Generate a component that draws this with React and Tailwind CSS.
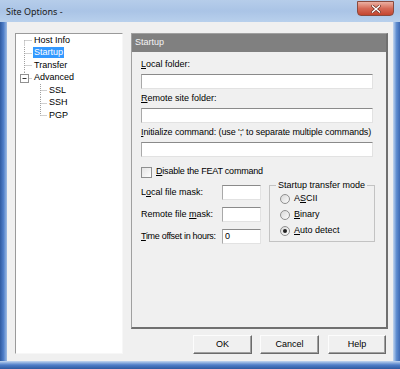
import React from 'react';

const Edit = ({ className = '', value = '' }) => (
  <div
    className={`h-[15px] bg-white border border-t-[#8a8a8a] border-l-[#a9a9a9] border-r-[#e2e2e2] border-b-[#e2e2e2] pl-[2px] leading-[13px] ${className}`}
  >
    {value}
  </div>
);

const Radio = ({ checked, children }) => (
  <div className="flex items-center h-[16px]">
    <span className="ml-[10px] w-[10px] h-[10px] rounded-full border border-[#8f8f8f] bg-gradient-to-br from-[#d8d8d8] to-[#fbfbfb] flex items-center justify-center">
      {checked && <span className="w-[4px] h-[4px] rounded-full bg-[#1f1f1f]" />}
    </span>
    <span className="ml-[4px]">{children}</span>
  </div>
);

const Line = ({ x1, y1, x2, y2 }) => (
  <line x1={x1} y1={y1} x2={x2} y2={y2} stroke="#a0a0a0" strokeWidth="1" strokeDasharray="1 1" />
);

const TreeRow = ({ level = 1, first, last, expander, selected, children }) => {
  const w = level === 1 ? 17 : 32;
  const vx = level === 1 ? 8.5 : 24.5;
  return (
    <div className="flex items-center h-[12.5px]">
      <svg width={w} height="12.5" className="shrink-0">
        <Line x1={vx} y1={first ? 6.5 : 0} x2={vx} y2={last ? 6.5 : 12.5} />
        <Line x1={vx} y1={6.5} x2={w - 1} y2={6.5} />
        {expander && (
          <g>
            <rect x="4.5" y="2.5" width="8" height="8" fill="#fff" stroke="#919191" />
            <line x1="6.5" y1="6.5" x2="10.5" y2="6.5" stroke="#333" />
          </g>
        )}
      </svg>
      <span
        className={`px-[1px] leading-[11px] ${selected ? 'bg-[#3399ff] text-white' : ''}`}
      >
        {children}
      </span>
    </div>
  );
};

const Button = ({ className = '', children }) => (
  <div
    className={`h-[19px] flex items-center justify-center bg-[#f0f0f0] border border-t-[#fcfcfc] border-l-[#fcfcfc] border-r-[#6b6b6b] border-b-[#6b6b6b] shadow-[inset_-1px_-1px_0_#a0a0a0] ${className}`}
  >
    {children}
  </div>
);

export default function App() {
  return (
    <div className="w-[400px] h-[369px] flex flex-col bg-[#5b88cc] font-['Liberation_Sans',Arial,sans-serif] text-[9px] text-black overflow-hidden">
      {/* title bar */}
      <div className="h-[22px] shrink-0 flex items-start bg-gradient-to-b from-[#b6cdea] via-[#aac4e6] to-[#b8d0ec]">
        <span className="ml-[6px] mt-[5px] font-['Noto_Sans',sans-serif] text-[9px] leading-[13px] text-[#1a1a1a]">
          Site Options -
        </span>
        <div className="ml-auto mr-[6px] mt-[1px] w-[37px] h-[15px] rounded-b-[4px] border border-[#8a4a3e] bg-gradient-to-b from-[#eab0a3] via-[#d56a57] to-[#c4442e] flex items-center justify-center">
          <svg width="10" height="8" viewBox="0 0 10 8">
            <path d="M1.5 1 L8.5 7 M8.5 1 L1.5 7" stroke="#6a2a1f" strokeWidth="2.8" strokeLinecap="square" />
            <path d="M1.5 1 L8.5 7 M8.5 1 L1.5 7" stroke="#ffffff" strokeWidth="1.5" strokeLinecap="square" />
          </svg>
        </div>
      </div>

      {/* body */}
      <div className="flex h-[339px] shrink-0">
        <div className="w-[7px] bg-gradient-to-r from-[#2f5aa0] via-[#4f7ec8] to-[#9fbce3]" />
        <div className="w-[386px] bg-[#f0f0f0] flex pt-[11px] pl-[8px] gap-[8px]">
          {/* tree */}
          <div className="w-[108px] h-[321px] bg-white border border-t-[#9a9a9a] border-l-[#9a9a9a] border-r-[#f7f7f7] border-b-[#f7f7f7]">
            <TreeRow first>Host Info</TreeRow>
            <TreeRow selected>Startup</TreeRow>
            <TreeRow>Transfer</TreeRow>
            <TreeRow last expander>Advanced</TreeRow>
            <TreeRow level={2}>SSL</TreeRow>
            <TreeRow level={2}>SSH</TreeRow>
            <TreeRow level={2} last>PGP</TreeRow>
          </div>

          {/* right side */}
          <div className="w-[257px] flex flex-col">
            <div className="h-[296px] border-l border-t border-l-[#a0a0a0] border-t-[#a0a0a0] border-r-2 border-b-2 border-r-[#707070] border-b-[#707070] flex flex-col">
              <div className="h-[18px] bg-[#808080] text-[#f4f4f4] pl-[3px] flex items-center">Startup</div>
              <div className="pl-[9px] flex flex-col">
                <div className="mt-[7px] h-[11px] leading-[11px]"><u>L</u>ocal folder:</div>
                <Edit className="mt-[4px] w-[232px]" />
                <div className="mt-[4px] h-[11px] leading-[11px]"><u>R</u>emote site folder:</div>
                <Edit className="mt-[4px] w-[232px]" />
                <div className="mt-[4px] h-[11px] leading-[11px] tracking-[-0.1px]">
                  <u>I</u>nitialize command: (use ';' to separate multiple commands)
                </div>
                <Edit className="mt-[4px] w-[232px]" />

                <div className="mt-[9px] h-[12px] flex items-center">
                  <span className="w-[11px] h-[11px] border border-[#8e8f8f] bg-gradient-to-br from-[#e4e4e4] to-[#fdfdfd]" />
                  <span className="ml-[4px] tracking-[-0.2px]"><u>D</u>isable the FEAT command</span>
                </div>

                <div className="mt-[7px] flex items-start">
                  <div className="flex flex-col gap-[7px]">
                    <div className="flex items-center h-[15px]">
                      <span className="w-[81px]">L<u>o</u>cal file mask:</span>
                      <Edit className="w-[39px]" />
                    </div>
                    <div className="flex items-center h-[15px]">
                      <span className="w-[81px]">Remote file <u>m</u>ask:</span>
                      <Edit className="w-[39px]" />
                    </div>
                    <div className="flex items-center h-[15px]">
                      <span className="w-[81px] whitespace-nowrap tracking-[-0.3px]"><u>T</u>ime offset in hours:</span>
                      <Edit className="w-[39px]" value="0" />
                    </div>
                  </div>
                  <fieldset className="ml-[8px] mt-[-5px] w-[106px] border border-[#c3c3c3] pb-[2px]">
                    <legend className="ml-[6px] px-[2px] leading-[11px]">Startup transfer mode</legend>
                    <Radio>A<u>S</u>CII</Radio>
                    <Radio><u>B</u>inary</Radio>
                    <Radio checked><u>A</u>uto detect</Radio>
                  </fieldset>
                </div>
              </div>
            </div>

            <div className="mt-[6px] flex pl-[62px]">
              <Button className="w-[59px]">OK</Button>
              <Button className="w-[59px] ml-[8px]">Cancel</Button>
              <Button className="w-[58px] ml-[9px]">Help</Button>
            </div>
          </div>
        </div>
        <div className="w-[7px] bg-gradient-to-r from-[#c4d7ef] via-[#5f8dd0] to-[#3d69b3]" />
      </div>
      <div className="h-[8px] shrink-0 bg-gradient-to-b from-[#c4d7ef] via-[#4f7ec8] to-[#2f5aa0]" />
    </div>
  );
}
